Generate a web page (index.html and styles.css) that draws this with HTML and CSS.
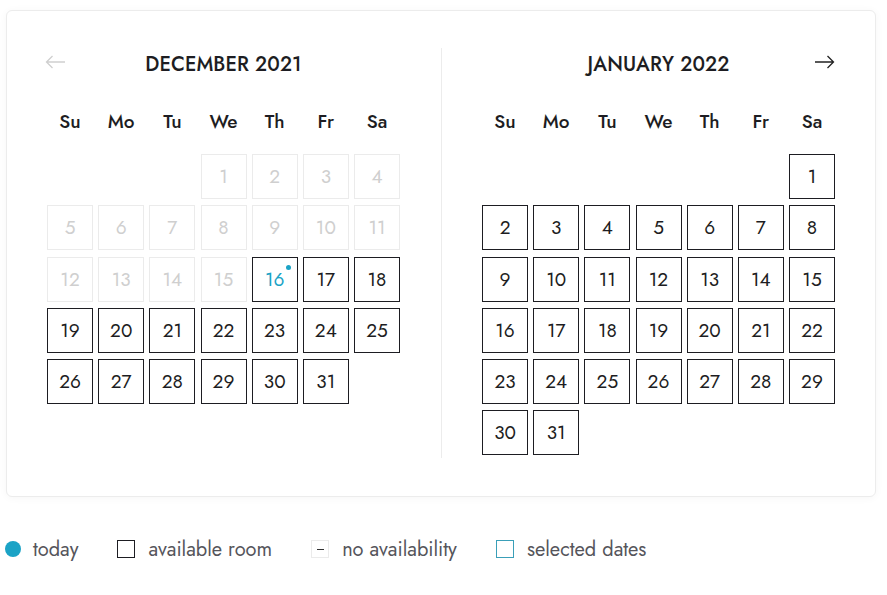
FILE: index.html
```html
<!DOCTYPE html>
<html lang="en">
<head>
<meta charset="utf-8">
<title>Availability calendar</title>
<link rel="stylesheet" href="styles.css">
</head>
<body>
<div class="card">
  <section class="month month-left">
    <div class="month-head">
      <span class="nav nav-prev"><svg width="21" height="14" viewBox="0 0 21 14"><path d="M20 7H1.5M7.5 1L1.5 7L7.5 13" fill="none" stroke="currentColor" stroke-width="1.3"/></svg></span>
      <h2 class="title">DECEMBER 2021</h2>
      <span></span>
    </div>
    <div class="weekdays"><span>Su</span><span>Mo</span><span>Tu</span><span>We</span><span>Th</span><span>Fr</span><span>Sa</span></div>
    <div class="days">
      <span class="empty"></span><span class="empty"></span><span class="empty"></span>
      <span class="day off">1</span><span class="day off">2</span><span class="day off">3</span><span class="day off">4</span>
      <span class="day off">5</span><span class="day off">6</span><span class="day off">7</span><span class="day off">8</span><span class="day off">9</span><span class="day off">10</span><span class="day off">11</span>
      <span class="day off">12</span><span class="day off">13</span><span class="day off">14</span><span class="day off">15</span><span class="day today">16</span><span class="day">17</span><span class="day">18</span>
      <span class="day">19</span><span class="day">20</span><span class="day">21</span><span class="day">22</span><span class="day">23</span><span class="day">24</span><span class="day">25</span>
      <span class="day">26</span><span class="day">27</span><span class="day">28</span><span class="day">29</span><span class="day">30</span><span class="day">31</span>
    </div>
  </section>
  <section class="month month-right">
    <div class="month-head">
      <span></span>
      <h2 class="title">JANUARY 2022</h2>
      <span class="nav nav-next"><svg width="21" height="14" viewBox="0 0 21 14"><path d="M1 7H19.5M13.5 1L19.5 7L13.5 13" fill="none" stroke="currentColor" stroke-width="1.3"/></svg></span>
    </div>
    <div class="weekdays"><span>Su</span><span>Mo</span><span>Tu</span><span>We</span><span>Th</span><span>Fr</span><span>Sa</span></div>
    <div class="days">
      <span class="empty"></span><span class="empty"></span><span class="empty"></span><span class="empty"></span><span class="empty"></span><span class="empty"></span>
      <span class="day">1</span>
      <span class="day">2</span><span class="day">3</span><span class="day">4</span><span class="day">5</span><span class="day">6</span><span class="day">7</span><span class="day">8</span>
      <span class="day">9</span><span class="day">10</span><span class="day">11</span><span class="day">12</span><span class="day">13</span><span class="day">14</span><span class="day">15</span>
      <span class="day">16</span><span class="day">17</span><span class="day">18</span><span class="day">19</span><span class="day">20</span><span class="day">21</span><span class="day">22</span>
      <span class="day">23</span><span class="day">24</span><span class="day">25</span><span class="day">26</span><span class="day">27</span><span class="day">28</span><span class="day">29</span>
      <span class="day">30</span><span class="day">31</span>
    </div>
  </section>
</div>
<ul class="legend">
  <li><span class="mark mark-today"></span>today</li>
  <li><span class="mark mark-avail"></span>available room</li>
  <li><span class="mark mark-none"></span>no availability</li>
  <li><span class="mark mark-sel"></span>selected dates</li>
</ul>
</body>
</html>
```

FILE: styles.css
```css
* { box-sizing: border-box; }
html, body { margin: 0; padding: 0; background: #ffffff; }
body {
  font-family: "Jost", "Lato", "Liberation Sans", sans-serif;
  color: #1d1d22;
}
.card {
  margin: 10px 0 0 6px;
  width: 870px;
  height: 487px;
  border: 1px solid #ececec;
  border-radius: 6px;
  background: #fff;
  box-shadow: 0 1px 8px rgba(0,0,0,0.04);
  display: flex;
  align-items: flex-start;
  padding-top: 37px;
}
.month {
  height: 410px;
  display: flex;
  flex-direction: column;
  align-items: center;
}
.month-left { width: 434px; padding-right: 1px; }
.month-right { width: 434px; border-left: 1px solid #ececec; }
.month-head {
  width: 100%;
  height: 34px;
  display: grid;
  grid-template-columns: 1fr auto 1fr;
  align-items: center;
}
.month-left .month-head { padding: 0 38px 0 38px; }
.month-right .month-head { padding: 0 40px 0 40px; }
.title {
  margin: 0;
  font-size: 20px;
  font-weight: 500;
  letter-spacing: 0.1px;
  line-height: 34px;
  color: #1d1d22;
}
.nav { display: flex; height: 14px; margin-top: -6px; }
.nav-prev { color: #cfcfcf; justify-content: flex-start; }
.nav-next { color: #222; justify-content: flex-end; }
.weekdays {
  margin-top: 25px;
  display: grid;
  grid-template-columns: repeat(7, 46px);
  column-gap: 5.17px;
  height: 30px;
  line-height: 30px;
  font-size: 19px;
  font-weight: 500;
  text-align: center;
  color: #1d1d22;
}
.days {
  margin-top: 17px;
  display: grid;
  grid-template-columns: repeat(7, 46px);
  grid-auto-rows: 45px;
  column-gap: 5.17px;
  row-gap: 6.25px;
}
.day {
  border: 1px solid #1d1d22;
  display: flex;
  align-items: center;
  justify-content: center;
  font-size: 19px;
  color: #1d1d22;
  position: relative;
}
.day.off {
  border-color: #ebebeb;
  color: #cfcfcf;
}
.day.today { color: #1ba3c6; }
.day.today::after {
  content: "";
  position: absolute;
  top: 7px;
  right: 6px;
  width: 5px;
  height: 5px;
  border-radius: 50%;
  background: #1ba3c6;
}
.legend {
  list-style: none;
  margin: 0;
  padding: 0 0 0 5px;
  display: flex;
  align-items: center;
  gap: 39px;
  margin-top: 37px;
  height: 30px;
  font-size: 20px;
  font-weight: 400;
  color: #55555b;
}
.legend li { display: flex; align-items: center; gap: 13px; }
.mark { display: inline-block; width: 18px; height: 18px; position: relative; }
.mark-today { width: 16px; height: 16px; border-radius: 50%; background: #1ba3c6; margin-right: -1px; }
.mark-avail { border: 1px solid #1d1d22; }
.mark-none { border: 1px solid #ebebeb; }
.mark-none::after {
  content: "";
  position: absolute;
  left: 5px;
  top: 8px;
  width: 7px;
  height: 1px;
  background: #333;
}
.mark-sel { border: 1px solid #3a9fb8; }
```
